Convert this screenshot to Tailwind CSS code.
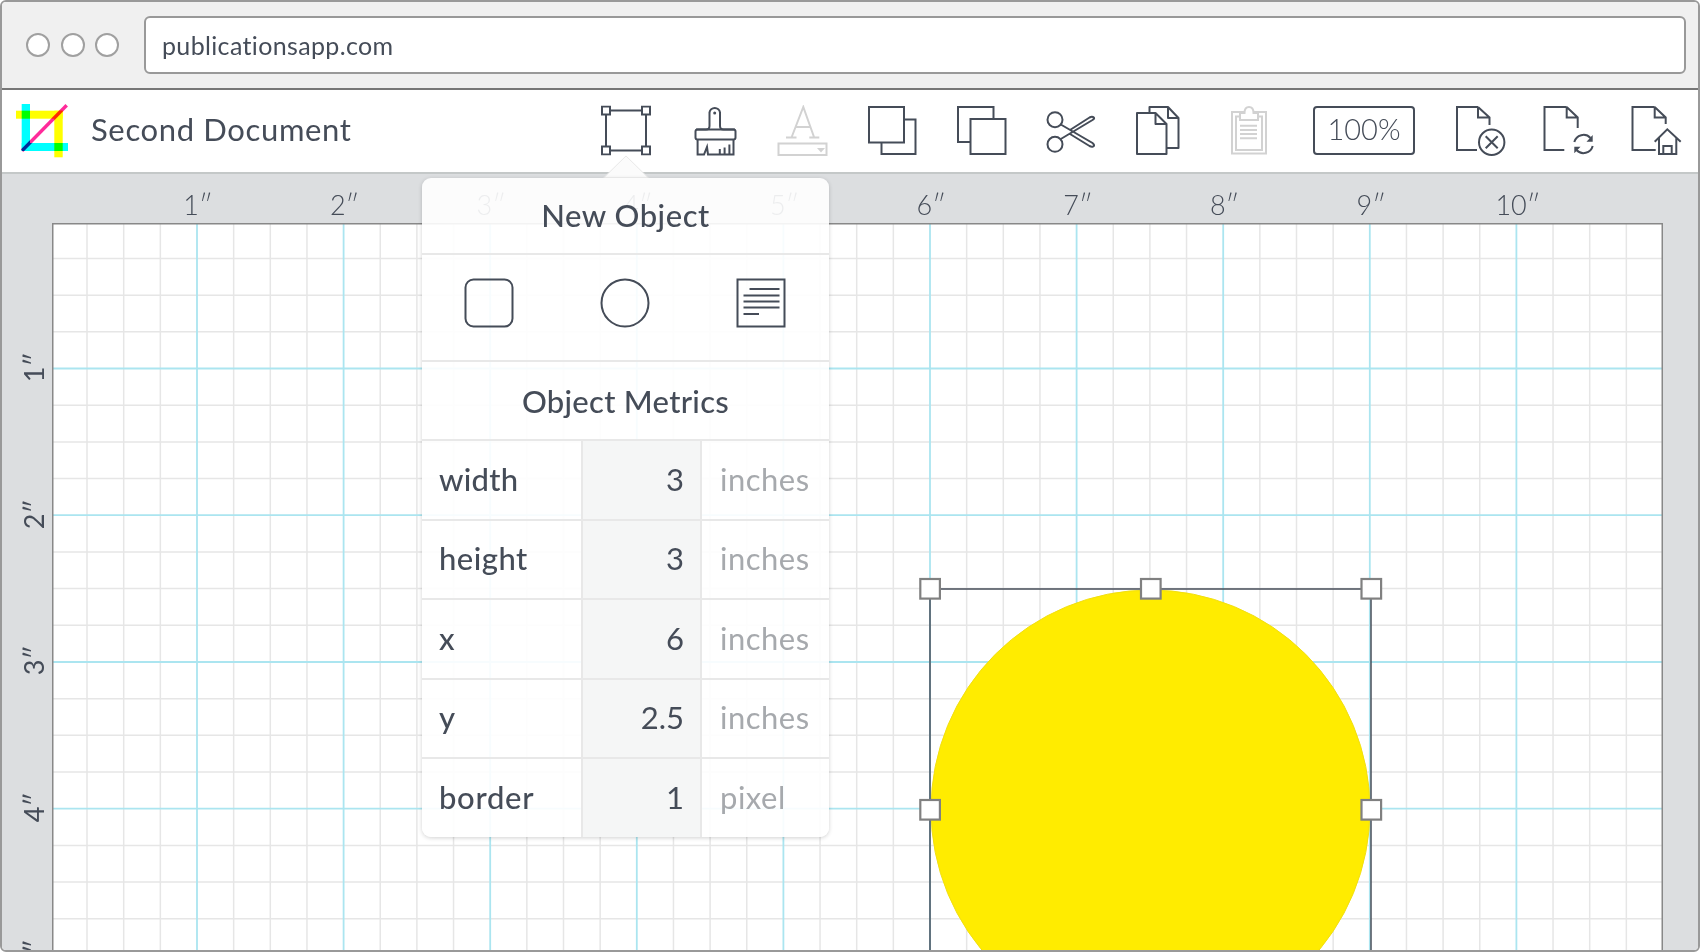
<!DOCTYPE html>
<html>
<head>
<meta charset="utf-8">
<script src="https://cdn.jsdelivr.net/npm/@tailwindcss/browser@4"></script>
</head>
<body class="m-0 bg-white">
<div class="relative w-[1700px] h-[952px] overflow-hidden bg-white font-['Lato','Noto_Sans',sans-serif] text-[#454c58] [font-variant-ligatures:none]">
  <div class="w-full h-full flex flex-col border-2 border-[#999] rounded-[6px] overflow-hidden">
    <!-- address bar -->
    <div class="h-[88px] shrink-0 bg-[#f0f0f0] border-b-2 border-[#777] flex items-center pl-[24px] pr-[12px] pb-[1px]">
      <div class="flex gap-[10.5px] mr-[25px]">
        <div class="w-[24px] h-[24px] rounded-full bg-white border-2 border-[#a0a0a0]"></div>
        <div class="w-[24px] h-[24px] rounded-full bg-white border-2 border-[#a0a0a0]"></div>
        <div class="w-[24px] h-[24px] rounded-full bg-white border-2 border-[#a0a0a0]"></div>
      </div>
      <div class="flex-1 h-[58px] bg-white border-2 border-[#999] rounded-[6px] flex items-center pl-[16px] pt-[2px] text-[25px] tracking-[.35px]">publicationsapp.com</div>
    </div>
    <!-- toolbar -->
    <div class="h-[84px] shrink-0 bg-white border-b-2 border-[#c4c8c8] flex items-center pl-[14px] relative">
      <svg class="w-[54px] h-[54px] shrink-0" viewBox="16 104 54 54">
        <g class="mix-blend-multiply"><rect x="21.7" y="104" width="8.3" height="47" fill="#00ffff"/><rect x="21.7" y="143" width="46.3" height="8" fill="#00ffff"/></g>
        <g class="mix-blend-multiply"><rect x="16" y="110.7" width="46.7" height="8" fill="#ffff00"/><rect x="54.3" y="110.7" width="8.4" height="46.6" fill="#ffff00"/></g>
        <path class="mix-blend-multiply" d="M22 150.7L66.7 105.3" stroke="#ff2a9a" stroke-width="3.4" fill="none"/>
      </svg>
      <div class="ml-[21px] text-[31px] tracking-[.65px] w-[510px] shrink-0 pb-[3px]">Second Document</div>
      <!-- transform -->
      <svg class="w-[50px] h-[50px] shrink-0 -translate-y-[0.5px]" viewBox="0 0 50 50" fill="none" stroke="#454c58" stroke-width="2"><rect x="1" y="1" width="8" height="8"/><rect x="41" y="1" width="8" height="8"/><rect x="1" y="41" width="8" height="8"/><rect x="41" y="41" width="8" height="8"/><path d="M9 5H41M9 45H41M5 9V41M45 9V41"/></svg>
      <!-- brush -->
      <svg class="w-[44px] h-[50px] ml-[43px] shrink-0" viewBox="0 0 44 50" fill="none" stroke="#454c58" stroke-width="2"><rect x="1.5" y="23.5" width="40" height="10" rx="2"/><path d="M2 23.5H12Q15.5 23.5 15.5 20V6.5A5.3 5.3 0 0 1 26 6.5V20Q26 23.5 29.5 23.5H41"/><circle cx="20.7" cy="7" r="1.5" fill="#454c58" stroke="none"/><path d="M3.6 33V48.5H10L13 41L14 48.5H39.5V33M25.8 48.5V43M30.6 48.5V41.5M35.4 48.5V38.5"/></svg>
      <!-- text style -->
      <svg class="w-[52px] h-[52px] ml-[39px] shrink-0" viewBox="0 0 52 52" fill="none" stroke="#d2d2d2" stroke-width="2"><path d="M14.7 32L26.3 2L37 32M9 32.5H19.5M32.3 32.5H42.3M18.5 22H34"/><rect x="1.5" y="38.5" width="48" height="11.5"/><path d="M40 43H48L44 47.5Z" fill="#d2d2d2" stroke="none"/></svg>
      <!-- send back -->
      <svg class="w-[52px] h-[52px] ml-[38px] shrink-0" viewBox="0 0 52 52" fill="none" stroke="#454c58" stroke-width="2"><rect x="2" y="2" width="35" height="35.5"/><path d="M37 14.5H48.5V49H14.5V37.5"/></svg>
      <!-- bring front -->
      <svg class="w-[52px] h-[52px] ml-[37px] shrink-0" viewBox="0 0 52 52" fill="none" stroke="#454c58" stroke-width="2"><rect x="14.5" y="14" width="35" height="35"/><path d="M14.5 37H2V2H37.5V14"/></svg>
      <!-- scissors -->
      <svg class="w-[52px] h-[52px] ml-[38px] shrink-0" viewBox="0 0 52 52" fill="none" stroke="#454c58" stroke-width="2"><circle cx="9" cy="14.7" r="7.5"/><circle cx="9" cy="39.3" r="7.5"/><path d="M14.8 19.5L46.5 38Q49.5 40.5 47 41.5Q45.5 42 43.5 41L24 29M14.8 34L46.5 15Q49.5 13 47 12Q45.5 11.5 43.5 12.5L24 25"/></svg>
      <!-- copy -->
      <svg class="w-[46px] h-[52px] ml-[37px] shrink-0" viewBox="0 0 46 52" fill="none" stroke="#454c58" stroke-width="2" stroke-linejoin="round"><path d="M2 8H20.5L31.5 19V49H2ZM20.5 8V19H31.5M14.5 8V2H33L43.5 13V43H31.5M33 2V13H43.5"/></svg>
      <!-- paste -->
      <svg class="w-[38px] h-[52px] ml-[49px] shrink-0" viewBox="0 0 38 52" fill="none" stroke="#d2d2d2" stroke-width="2"><rect x="2" y="7" width="34" height="41.5"/><rect x="6" y="11.5" width="26" height="33.5"/><path d="M10 15V8H14.5Q14.5 2 19 2Q23.5 2 23.5 8H28V15Z" fill="#fff"/><path d="M10 20.7H27M10 25H27M10 29H27M10 33.3H27"/></svg>
      <!-- zoom -->
      <div class="w-[102px] h-[49px] ml-[45px] shrink-0 border-2 border-[#454c58] rounded-[4px] flex items-center justify-center text-[29px] font-light pb-[2px] -translate-y-[1px]">100%</div>
      <!-- doc x -->
      <svg class="w-[52px] h-[52px] ml-[40px] shrink-0" viewBox="0 0 52 52" fill="none" stroke="#454c58" stroke-width="2"><path d="M23 2H2V45H22M23 2L34.5 12.5V20M23 2V12.5H34.5"/><circle cx="36.7" cy="37.3" r="12.7"/><path d="M30.7 31.3L42.7 43.3M42.7 31.3L30.7 43.3"/></svg>
      <!-- doc refresh -->
      <svg class="w-[52px] h-[52px] ml-[36px] shrink-0" viewBox="0 0 52 52" fill="none" stroke="#454c58" stroke-width="2"><path d="M23.7 2H1.5V45H21.3M23.7 2L34.7 12.5V23M23.7 2V12.5H34.7"/><path d="M31.3 37A9.5 9.5 0 0 1 47.5 33M49.7 41A9.5 9.5 0 0 1 33.5 45"/><path d="M49.7 30V36.7H43.5ZM31.3 48.3V41.7H37.5Z" fill="#454c58" stroke="none"/></svg>
      <!-- doc home -->
      <svg class="w-[52px] h-[52px] ml-[36px] shrink-0" viewBox="0 0 52 52" fill="none" stroke="#454c58" stroke-width="2"><path d="M23.7 2H1.5V45H24.7M23.7 2L34.7 12.5V19M23.7 2V12.5H34.7"/><path d="M23.7 36.7L36.3 24.3L49.7 36.7M28 32.5V49H45.3V32.5M32.3 49V41H40.7V49"/></svg>
    </div>
    <!-- workspace -->
    <div class="flex-1 min-h-0 bg-[#dcdee0] flex flex-col">
      <div class="h-[49px] shrink-0 flex pl-[122.5px] text-[27px] font-light">
        <div class="w-[146.68px] shrink-0 text-center leading-[62px]">1″</div>
        <div class="w-[146.68px] shrink-0 text-center leading-[62px]">2″</div>
        <div class="w-[146.68px] shrink-0 text-center leading-[62px]">3″</div>
        <div class="w-[146.68px] shrink-0 text-center leading-[62px]">4″</div>
        <div class="w-[146.68px] shrink-0 text-center leading-[62px]">5″</div>
        <div class="w-[146.68px] shrink-0 text-center leading-[62px]">6″</div>
        <div class="w-[146.68px] shrink-0 text-center leading-[62px]">7″</div>
        <div class="w-[146.68px] shrink-0 text-center leading-[62px]">8″</div>
        <div class="w-[146.68px] shrink-0 text-center leading-[62px]">9″</div>
        <div class="w-[146.68px] shrink-0 text-center leading-[62px]">10″</div>
      </div>
      <div class="flex-1 min-h-0 flex">
        <div class="w-[50px] shrink-0 flex flex-col pt-[71px] text-[27px]">
          <div class="h-[146.68px] shrink-0 flex items-center justify-center pl-[14px]"><span class="-rotate-90 block">1″</span></div>
          <div class="h-[146.68px] shrink-0 flex items-center justify-center pl-[14px]"><span class="-rotate-90 block">2″</span></div>
          <div class="h-[146.68px] shrink-0 flex items-center justify-center pl-[14px]"><span class="-rotate-90 block">3″</span></div>
          <div class="h-[146.68px] shrink-0 flex items-center justify-center pl-[14px]"><span class="-rotate-90 block">4″</span></div>
          <div class="h-[146.68px] shrink-0 flex items-center justify-center pl-[14px]"><span class="-rotate-90 block">5″</span></div>
        </div>
        <svg class="w-[1611px] h-[727px] shrink-0 bg-white" viewBox="52 223 1611 727" fill="none">
          <path stroke="#e6e6e6" stroke-width="1.5" d="M87 223V950M123.7 223V950M160.35 223V950M233.65 223V950M270.3 223V950M306.95 223V950M380.25 223V950M416.9 223V950M453.55 223V950M526.85 223V950M563.5 223V950M600.15 223V950M673.45 223V950M710.1 223V950M746.75 223V950M820.05 223V950M856.7 223V950M893.35 223V950M966.65 223V950M1003.3 223V950M1039.95 223V950M1113.25 223V950M1149.9 223V950M1186.55 223V950M1259.85 223V950M1296.5 223V950M1333.15 223V950M1406.45 223V950M1443.1 223V950M1479.75 223V950M1553.05 223V950M1589.7 223V950M1626.35 223V950M52 258.5H1663M52 295.2H1663M52 331.8H1663M52 405.2H1663M52 441.9H1663M52 478.5H1663M52 551.9H1663M52 588.6H1663M52 625.3H1663M52 698.7H1663M52 735.3H1663M52 772H1663M52 845.4H1663M52 882.1H1663M52 918.7H1663"/>
          <path stroke="#abe5f0" stroke-width="1.8" d="M197 223V950M343.6 223V950M490.2 223V950M636.8 223V950M783.4 223V950M930 223V950M1076.6 223V950M1223.2 223V950M1369.8 223V950M1516.4 223V950M52 368.5H1663M52 515.2H1663M52 662H1663M52 808.7H1663"/>
          <path stroke="#888" stroke-width="2" d="M52.5 950V223.5H1662.5V950"/>
          <circle cx="1150.5" cy="809.5" r="219.5" fill="#ffec00" stroke="#f2df10" stroke-width="1"/>
          <path stroke="#454c58" stroke-opacity=".75" stroke-width="2" d="M930 950V589H1371V950"/>
          <g fill="#fff" stroke="#808080" stroke-width="2.2">
            <rect x="920.3" y="579" width="19.6" height="19.6"/>
            <rect x="1141" y="579" width="19.6" height="19.6"/>
            <rect x="1361.5" y="579" width="19.6" height="19.6"/>
            <rect x="920.3" y="800" width="19.6" height="19.6"/>
            <rect x="1361.5" y="800" width="19.6" height="19.6"/>
          </g>
        </svg>
      </div>
    </div>
  </div>
  <!-- popover arrow -->
  <svg class="absolute left-[601px] top-[154px] w-[50px] h-[26px]" viewBox="0 0 50 26"><path d="M2.5 24L25 2L47.5 24Z" fill="#fbfbfb" stroke="#e9e9e9" stroke-width="1"/></svg>
  <!-- popover -->
  <div class="absolute left-[422px] top-[178px] w-[407px] h-[659px] rounded-[9px] bg-white/90 shadow-[0_1px_4px_rgba(0,0,0,.18)] flex flex-col overflow-hidden">
    <div class="h-[77px] shrink-0 border-b-2 border-[#e8e8e8] flex items-center justify-center text-[31px] font-medium tracking-[.55px]">New Object</div>
    <div class="h-[107px] shrink-0 border-b-2 border-[#e8e8e8] grid grid-cols-3 items-center justify-items-center pb-[10px]">
      <svg class="w-[50px] h-[50px] -ml-[2px]" viewBox="0 0 50 50" fill="none" stroke="#454c58" stroke-width="2"><rect x="1.5" y="1.5" width="47" height="47" rx="8"/></svg>
      <svg class="w-[50px] h-[50px] -ml-[1px]" viewBox="0 0 50 50" fill="none" stroke="#454c58" stroke-width="2"><circle cx="25" cy="25" r="23.5"/></svg>
      <svg class="w-[50px] h-[50px]" viewBox="0 0 50 50" fill="none" stroke="#454c58" stroke-width="2"><rect x="1.5" y="1.5" width="47" height="47"/><path d="M13.5 11H43.5M7.5 17.5H43.5M7.5 23.5H43.5M7.5 29.5H43.5M7.5 36H23"/></svg>
    </div>
    <div class="h-[79px] shrink-0 border-b-2 border-[#e8e8e8] flex items-center justify-center pt-[2px] text-[31px] font-medium tracking-[.3px]">Object Metrics</div>
    <div class="h-[79.5px] shrink-0 border-b-2 border-[#e8e8e8] flex text-[31px]">
      <div class="w-[159px] shrink-0 flex items-center pl-[17px] pb-[2px] font-medium tracking-[.3px]">width</div>
      <div class="w-[121px] shrink-0 flex items-center justify-end pr-[16px] pb-[2px] bg-[#f5f6f6] border-x-2 border-[#e8e8e8]">3</div>
      <div class="flex-1 flex items-center pl-[18px] pb-[2px] text-[#a6a9ad] tracking-[.5px]">inches</div>
    </div>
    <div class="h-[79.5px] shrink-0 border-b-2 border-[#e8e8e8] flex text-[31px]">
      <div class="w-[159px] shrink-0 flex items-center pl-[17px] pb-[2px] font-medium tracking-[.5px]">height</div>
      <div class="w-[121px] shrink-0 flex items-center justify-end pr-[16px] pb-[2px] bg-[#f5f6f6] border-x-2 border-[#e8e8e8]">3</div>
      <div class="flex-1 flex items-center pl-[18px] pb-[2px] text-[#a6a9ad] tracking-[.5px]">inches</div>
    </div>
    <div class="h-[79.5px] shrink-0 border-b-2 border-[#e8e8e8] flex text-[31px]">
      <div class="w-[159px] shrink-0 flex items-center pl-[17px] pb-[2px] font-medium tracking-[.5px]">x</div>
      <div class="w-[121px] shrink-0 flex items-center justify-end pr-[16px] pb-[2px] bg-[#f5f6f6] border-x-2 border-[#e8e8e8]">6</div>
      <div class="flex-1 flex items-center pl-[18px] pb-[2px] text-[#a6a9ad] tracking-[.5px]">inches</div>
    </div>
    <div class="h-[79.5px] shrink-0 border-b-2 border-[#e8e8e8] flex text-[31px]">
      <div class="w-[159px] shrink-0 flex items-center pl-[17px] pb-[2px] font-medium tracking-[.5px]">y</div>
      <div class="w-[121px] shrink-0 flex items-center justify-end pr-[16px] pb-[2px] bg-[#f5f6f6] border-x-2 border-[#e8e8e8]">2.5</div>
      <div class="flex-1 flex items-center pl-[18px] pb-[2px] text-[#a6a9ad] tracking-[.5px]">inches</div>
    </div>
    <div class="flex-1 flex text-[31px]">
      <div class="w-[159px] shrink-0 flex items-center pl-[17px] pb-[2px] font-medium tracking-[.7px]">border</div>
      <div class="w-[121px] shrink-0 flex items-center justify-end pr-[16px] pb-[2px] bg-[#f5f6f6] border-x-2 border-[#e8e8e8]">1</div>
      <div class="flex-1 flex items-center pl-[18px] pb-[2px] text-[#a6a9ad] tracking-[.5px]">pixel</div>
    </div>
  </div>
</div>
</body>
</html>
